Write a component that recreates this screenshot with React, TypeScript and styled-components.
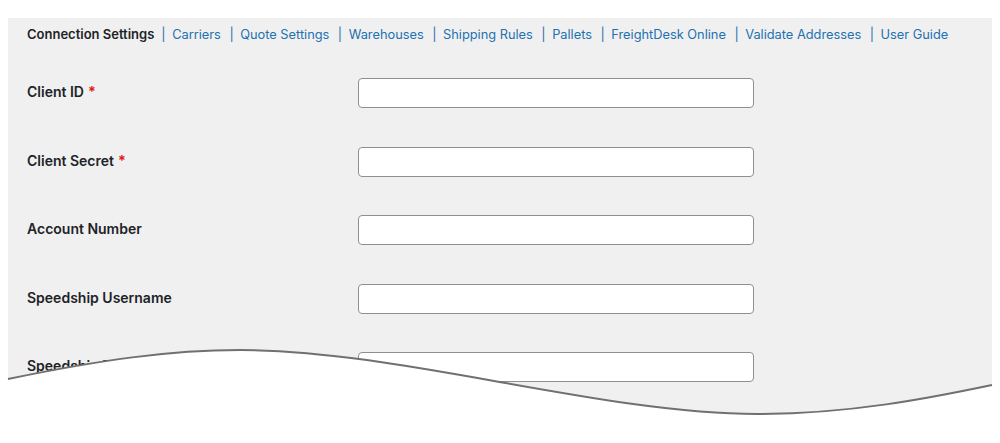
import React from "react";
import styled, { createGlobalStyle } from "styled-components";

const Global = createGlobalStyle`
  html, body {
    margin: 0;
    padding: 0;
    background: #ffffff;
    height: 443px;
    overflow: hidden;
  }
  body {
    font-family: Inter, "Liberation Sans", Arial, sans-serif;
    -webkit-font-smoothing: antialiased;
  }
`;

const Page = styled.div`
  position: relative;
  height: 443px;
  padding: 18px 8px 0;
  box-sizing: border-box;
  overflow: hidden;
`;

const Panel = styled.div`
  background: #f0f0f0;
  height: 600px;
  padding: 8px 19px 0;
  box-sizing: border-box;
`;

const Nav = styled.nav`
  display: flex;
  align-items: center;
  height: 17px;
  font-size: 13px;
  line-height: 17px;
`;

const Tab = styled.a<{ $active?: boolean }>`
  color: ${(p) => (p.$active ? "#1d2327" : "#2271b1")};
  font-weight: ${(p) => (p.$active ? 600 : 400)};
  font-size: ${(p) => (p.$active ? "13px" : "12.8px")};
  text-decoration: none;
  white-space: nowrap;
`;

const Sep = styled.span<{ $first?: boolean }>`
  color: #2e6fb0;
  margin: 0 6.5px 0 ${(p) => (p.$first ? 7 : 8.5)}px;
`;

const Form = styled.div`
  display: grid;
  grid-template-columns: 331px 396px;
  row-gap: 38.5px;
  margin-top: 35px;
  align-items: center;
`;

const Label = styled.label`
  font-size: 14px;
  font-weight: 600;
  color: #1d2327;
  padding-bottom: 3px;
`;

const Req = styled.span`
  color: #e3191c;
  margin-left: 4px;
  font-weight: 700;
`;

const Input = styled.input`
  box-sizing: border-box;
  width: 396px;
  height: 30px;
  border: 1px solid #8c8f94;
  border-radius: 4px;
  background: #ffffff;
  margin: 0;
  padding: 0 8px;
`;

const Wave = styled.svg`
  position: absolute;
  left: 0;
  top: 0;
  width: 1000px;
  height: 443px;
  pointer-events: none;
`;

const tabs = [
  "Carriers",
  "Quote Settings",
  "Warehouses",
  "Shipping Rules",
  "Pallets",
  "FreightDesk Online",
  "Validate Addresses",
  "User Guide",
];

const fields: { label: string; required?: boolean }[] = [
  { label: "Client ID", required: true },
  { label: "Client Secret", required: true },
  { label: "Account Number" },
  { label: "Speedship Username" },
  { label: "Speedship Password" },
  { label: "Quote Timeout" },
];

const curve =
  "M 8 379 C 100 360, 170 350, 240 350 C 400 350, 600 414, 757 414 C 850 414, 930 398, 992 385";

export default function App() {
  return (
    <>
      <Global />
      <Page>
        <Panel>
          <Nav>
            <Tab $active>Connection Settings</Tab>
            {tabs.map((t, i) => (
              <React.Fragment key={t}>
                <Sep $first={i === 0}>|</Sep>
                <Tab href="#">{t}</Tab>
              </React.Fragment>
            ))}
          </Nav>
          <Form>
            {fields.map((f) => (
              <React.Fragment key={f.label}>
                <Label>
                  {f.label}
                  {f.required && <Req>*</Req>}
                </Label>
                <Input type="text" />
              </React.Fragment>
            ))}
          </Form>
        </Panel>
        <Wave viewBox="0 0 1000 443">
          <path d={`${curve} L 1000 385 L 1000 443 L 0 443 L 0 379 Z`} fill="#ffffff" />
          <path d={curve} fill="none" stroke="#707070" strokeWidth="2" />
        </Wave>
      </Page>
    </>
  );
}
